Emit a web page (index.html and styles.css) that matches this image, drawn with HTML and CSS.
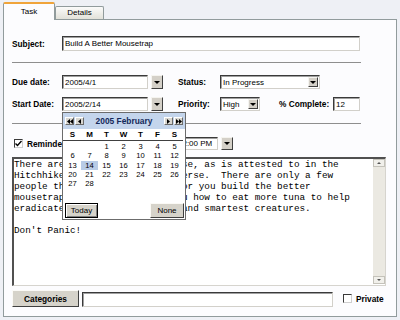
FILE: index.html
```html
<!DOCTYPE html>
<html lang="en">
<head>
    <meta charset="UTF-8">
    <meta name="viewport" content="width=device-width, initial-scale=1.0">
    <title>Task</title>
    <link rel="stylesheet" href="styles.css">
</head>
<body>
    <div class="window">
        <div class="tabs">
            <div class="tab active">Task</div>
            <div class="tab">Details</div>
        </div>
        <div class="panel">
            <div class="row subject-row">
                <label class="label">Subject:</label>
                <input class="field subject" type="text" value="Build A Better Mousetrap">
            </div>
            <div class="rule"></div>

            <div class="row field-row">
                <label class="label">Due date:</label>
                <div class="date">
                    <input class="field date-input" type="text" value="2005/4/1">
                    <span class="drop"></span>
                </div>
                <label class="label side">Status:</label>
                <div class="field select status"><span>In Progress</span><span class="drop inner"></span></div>
            </div>

            <div class="row field-row start-row">
                <label class="label">Start Date:</label>
                <div class="date">
                    <input class="field date-input" type="text" value="2005/2/14">
                    <span class="drop"></span>
                    <div class="calendar">
                        <div class="cal-head">
                            <span class="cal-btn"><svg width="6" height="5" viewBox="0 0 6 5"><path d="M3 0v5L0 2.5zM6 0v5L3 2.5z" fill="#000"/></svg></span>
                            <span class="cal-btn"><svg width="3" height="5" viewBox="0 0 3 5"><path d="M3 0v5L0 2.5z" fill="#000"/></svg></span>
                            <span class="cal-title">2005 February</span>
                            <span class="cal-btn"><svg width="3" height="5" viewBox="0 0 3 5"><path d="M0 0v5L3 2.5z" fill="#000"/></svg></span>
                            <span class="cal-btn"><svg width="6" height="5" viewBox="0 0 6 5"><path d="M0 0v5L3 2.5zM3 0v5L6 2.5z" fill="#000"/></svg></span>
                        </div>
                        <div class="cal-days">
                            <span>S</span><span>M</span><span>T</span><span>W</span><span>T</span><span>F</span><span>S</span>
                        </div>
                        <div class="cal-dates">
                            <span></span><span></span><span>1</span><span>2</span><span>3</span><span>4</span><span>5</span>
                            <span>6</span><span>7</span><span>8</span><span>9</span><span>10</span><span>11</span><span>12</span>
                            <span>13</span><span class="picked">14</span><span>15</span><span>16</span><span>17</span><span>18</span><span>19</span>
                            <span>20</span><span>21</span><span>22</span><span>23</span><span>24</span><span>25</span><span>26</span>
                            <span>27</span><span>28</span>
                        </div>
                        <div class="cal-foot">
                            <button class="cal-today">Today</button>
                            <button class="cal-none">None</button>
                        </div>
                    </div>
                </div>
                <label class="label side">Priority:</label>
                <div class="field select priority"><span>High</span><span class="drop inner"></span></div>
                <label class="label pct-label">% Complete:</label>
                <input class="field pct" type="text" value="12">
            </div>
            <div class="rule second"></div>

            <div class="row remind-row">
                <label class="label remind"><span class="check"><svg width="7" height="7" viewBox="0 0 7 7"><path d="M0.5 3.5l2 2 4-4.5" fill="none" stroke="#000" stroke-width="1.4"/></svg></span>Reminder:</label>
                <div class="date">
                    <input class="field date-input" type="text" value="2005/2/14">
                    <span class="drop"></span>
                </div>
                <div class="date time">
                    <input class="field time-input" type="text" value="12:00 PM">
                    <span class="drop"></span>
                </div>
            </div>

            <div class="notes">
                <div class="notes-text">There are mice in each farmhouse, as is attested to in the
Hitchhiker's Guide to the Universe.  There are only a few
people that will really care, or you build the better
mousetrap, which will teach you how to eat more tuna to help
eradicate the planet's oldest and smartest creatures.

Don't Panic!</div>
                <div class="scrollbar">
                    <span class="scroll-btn up"></span>
                    <span class="scroll-btn down"></span>
                </div>
            </div>

            <div class="row bottom-row">
                <button class="categories">Categories</button>
                <input class="field cat-input" type="text" value="">
                <label class="label private"><span class="check"></span>Private</label>
            </div>
        </div>
    </div>
</body>
</html>
```

FILE: styles.css
```css
body {
    margin: 0;
    background: #eef0f5;
    font-family: "Liberation Sans", Arial, sans-serif;
    font-size: 8px;
    color: #000;
}
.window {
    margin: 2px 3px 0 3px;
}

/* tabs */
.tabs {
    display: flex;
    align-items: flex-end;
    height: 17px;
}
.tab {
    box-sizing: border-box;
    width: 49px;
    height: 13px;
    border: 1px solid #919b9c;
    border-bottom: none;
    border-radius: 2px 2px 0 0;
    background: linear-gradient(#fbfbfa, #e2e1d9);
    text-align: center;
    line-height: 11px;
}
.tab.active {
    position: relative;
    z-index: 1;
    width: 52px;
    height: 18px;
    margin-bottom: -1px;
    background: #fcfcfe;
    border-top: 2px solid #f0a43a;
    line-height: 15px;
}

.panel {
    border: 1px solid #919b9c;
    background: #fcfcfe;
    padding: 16px 10px 9px 8px;
}
.row {
    display: flex;
    align-items: center;
}
.label {
    flex: none;
    width: 50px;
    font-weight: bold;
    font-size: 8.3px;
}
.field {
    box-sizing: border-box;
    height: 100%;
    margin: 0;
    padding: 0 2px;
    border: 1px solid;
    border-color: #3a3a3a #d2d0ca #d2d0ca #3a3a3a;
    box-shadow: inset 1px 1px 0 #a0a0a0;
    background: #fff;
    font: inherit;
    color: #000;
    outline: none;
}
.subject-row {
    height: 15px;
}
.subject {
    width: 298px;
}
.rule {
    width: 349px;
    height: 1px;
    margin-top: 11px;
    background: #8e8e8e;
}
.rule.second {
    margin-top: 12px;
}

.field-row {
    height: 14px;
    margin-top: 12px;
}
.start-row {
    margin-top: 8px;
}
.date {
    position: relative;
    display: flex;
    gap: 3px;
    height: 100%;
}
.date-input {
    width: 86px;
}
.drop {
    box-sizing: border-box;
    width: 12px;
    height: 100%;
    display: flex;
    align-items: center;
    justify-content: center;
    background: #d4d0c8;
    border: 1px solid;
    border-color: #f5f4f0 #404040 #404040 #f5f4f0;
}
.drop::after {
    content: "";
    border-left: 3px solid transparent;
    border-right: 3px solid transparent;
    border-top: 3px solid #000;
}
.drop.inner {
    width: 10px;
    height: 10px;
}
.side {
    width: 42px;
    margin-left: 15px;
}
.select {
    display: flex;
    align-items: center;
    justify-content: space-between;
    padding: 0 1px 0 2px;
}
.status {
    width: 100px;
}
.priority {
    width: 40px;
}
.pct-label {
    width: 54px;
    margin-left: 19px;
}
.pct {
    width: 27px;
}

/* reminder */
.remind-row {
    height: 13px;
    margin-top: 13px;
}
.remind, .private {
    display: flex;
    align-items: center;
}
.check {
    box-sizing: border-box;
    width: 9px;
    height: 9px;
    margin: 0 4px 0 2px;
    display: flex;
    align-items: center;
    justify-content: center;
    background: #fff;
    border: 1px solid;
    border-color: #3a3a3a #cfcfcf #cfcfcf #3a3a3a;
}
.time {
    margin-left: 12px;
}
.time-input {
    width: 43px;
}

/* notes */
.notes {
    box-sizing: border-box;
    display: flex;
    height: 129px;
    margin-top: 7px;
    background: #fff;
    border: 1px solid;
    border-width: 2px 1px 1px 2px;
    border-color: #505050 #d6d4ce #d6d4ce #505050;
}
.notes-text {
    flex: 1;
    overflow: hidden;
    white-space: pre;
    font-family: "Liberation Mono", "Courier New", monospace;
    font-size: 9.33px;
    line-height: 11px;
}
.scrollbar {
    width: 12px;
    margin: 0 0 1px 0;
    display: flex;
    flex-direction: column;
    justify-content: space-between;
    background: #ebe9e2;
}
.scroll-btn {
    box-sizing: border-box;
    height: 8px;
    display: flex;
    align-items: center;
    justify-content: center;
    background: #f1f0eb;
    border: 1px solid #c4c2ba;
}
.scroll-btn::after {
    content: "";
    border-left: 2px solid transparent;
    border-right: 2px solid transparent;
}
.up::after {
    border-bottom: 2px solid #555;
}
.down::after {
    border-top: 2px solid #555;
}

/* bottom */
.bottom-row {
    height: 17px;
    margin-top: 4px;
    align-items: flex-end;
}
.categories {
    box-sizing: border-box;
    width: 67px;
    height: 17px;
    margin: 0;
    padding: 0;
    background: #d6d3ca;
    border: 1px solid;
    border-color: #fbfaf6 #404040 #404040 #fbfaf6;
    font: inherit;
    font-weight: bold;
    font-size: 8.3px;
}
.cat-input {
    width: 251px;
    height: 15px;
    margin-left: 3px;
}
.private {
    width: auto;
    margin-left: 8px;
    align-self: center;
}

/* calendar popup */
.calendar {
    position: absolute;
    left: 0;
    top: 15px;
    z-index: 2;
    box-sizing: border-box;
    width: 124px;
    height: 108px;
    display: flex;
    flex-direction: column;
    background: #fff;
    border: 1px solid #6c6c6c;
}
.cal-head {
    height: 16px;
    display: flex;
    align-items: center;
    gap: 1px;
    padding: 0 2px;
    background: #c4d5ec;
}
.cal-btn {
    box-sizing: border-box;
    width: 9px;
    height: 8px;
    display: flex;
    align-items: center;
    justify-content: center;
    background: #d8d6d0;
    border: 1px solid;
    border-color: #ffffff #6a6a6a #6a6a6a #ffffff;
}
.cal-title {
    flex: 1;
    text-align: center;
    font-weight: bold;
    font-size: 8.4px;
    color: #14295a;
}
.cal-days, .cal-dates {
    display: grid;
    grid-template-columns: repeat(7, 17px);
    text-align: center;
    padding-left: 1px;
}
.cal-days {
    height: 10px;
    line-height: 10px;
    margin: 1px 2px 0 0;
    border-bottom: 1px solid #404040;
    font-weight: bold;
    font-size: 8px;
}
.cal-dates {
    grid-auto-rows: 9.25px;
    line-height: 9.25px;
    margin-top: 1px;
    font-size: 7.6px;
}
.picked {
    background: #b8cbe6;
}
.cal-foot {
    margin-top: auto;
    display: flex;
    justify-content: space-between;
    padding: 0 1px 1px 2px;
}
.cal-foot button {
    box-sizing: border-box;
    height: 15px;
    margin: 0;
    padding: 0;
    background: #d6d3ca;
    font: inherit;
}
.cal-today {
    width: 33px;
    border: 1px solid #000;
    box-shadow: inset 1px 1px 0 #fff, inset -1px -1px 0 #808080;
}
.cal-none {
    width: 34px;
    border: 1px solid;
    border-color: #fbfaf6 #404040 #404040 #fbfaf6;
}
```
